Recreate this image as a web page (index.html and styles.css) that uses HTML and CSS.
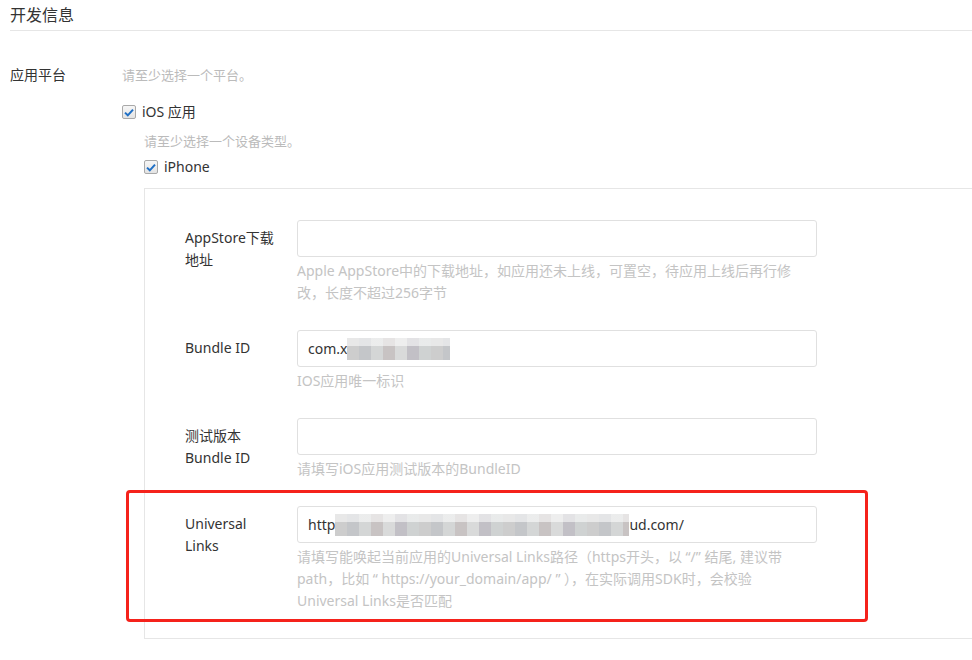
FILE: index.html
```html
<!doctype html>
<html lang="zh-CN">
	<head>
		<meta charset="UTF-8">
		<meta name="viewport" content="width=device-width, initial-scale=1.0">
		<title>开发信息</title>
		<link rel="stylesheet" href="styles.css">
	</head>
	<body>

		<div class="secao">
			<div class="titulo">开发信息</div>

			<div class="plataforma">
				<div class="plabel">应用平台</div>
				<div class="pconteudo">
					<div class="dica">请至少选择一个平台。</div>
					<label class="opcao">
						<span class="caixa"><svg width="10" height="9" viewBox="0 0 10 9"><path d="M1 4.6 L3.8 7.3 L9 1.6" fill="none" stroke="#1f6fc5" stroke-width="2"/></svg></span>iOS 应用
					</label>
					<div class="sub">
						<div class="dica">请至少选择一个设备类型。</div>
						<label class="opcao">
							<span class="caixa"><svg width="10" height="9" viewBox="0 0 10 9"><path d="M1 4.6 L3.8 7.3 L9 1.6" fill="none" stroke="#1f6fc5" stroke-width="2"/></svg></span>iPhone
						</label>

						<div class="painel">
							<div class="linha">
								<div class="rotulo"><span>AppStore下载<br>地址</span></div>
								<div class="campo">
									<div class="entrada"></div>
									<div class="ajuda">Apple AppStore中的下载地址，如应用还未上线，可置空，待应用上线后再行修<br>改，长度不超过256字节</div>
								</div>
							</div>
							<div class="linha">
								<div class="rotulo"><span>Bundle ID</span></div>
								<div class="campo">
									<div class="entrada">com.x<span class="borrao curto"></span></div>
									<div class="ajuda">IOS应用唯一标识</div>
								</div>
							</div>
							<div class="linha">
								<div class="rotulo"><span>测试版本<br>Bundle ID</span></div>
								<div class="campo">
									<div class="entrada"></div>
									<div class="ajuda">请填写iOS应用测试版本的BundleID</div>
								</div>
							</div>
							<div class="linha marcada">
								<div class="rotulo"><span>Universal<br>Links</span></div>
								<div class="campo">
									<div class="entrada">http<span class="borrao longo"></span>ud.com/</div>
									<div class="ajuda">请填写能唤起当前应用的Universal Links路径（https开头，以 “/” 结尾, 建议带<br>path，比如 “ https://your_domain/app/ ” ），在实际调用SDK时，会校验<br>Universal Links是否匹配</div>
								</div>
								<div class="destaque"></div>
							</div>
						</div>
					</div>
				</div>
			</div>
		</div>

	</body>
</html>
```

FILE: styles.css
```css
body{
	margin: 0;
	font-family: "Noto Sans", "Noto Sans CJK SC", sans-serif;
	color: #333;
	background: #fff;
	overflow: hidden;
}

.secao{
	padding-left: 10px;
}

.titulo{
	font-size: 16px;
	line-height: 30px;
	height: 30px;
	border-bottom: 1px solid #e6e6e6;
}

.plataforma{
	display: flex;
	margin-top: 34px;
}

.plabel{
	width: 112px;
	font-size: 14px;
	line-height: 20px;
	flex-shrink: 0;
}

.pconteudo{
	flex: 1;
}

.dica{
	font-size: 13px;
	line-height: 20px;
	color: #bbb;
}

.opcao{
	display: flex;
	align-items: center;
	font-size: 14px;
	line-height: 20px;
	margin-top: 17px;
}

.caixa{
	width: 12px;
	height: 12px;
	border: 1px solid #a9a9a9;
	border-radius: 2px;
	background: linear-gradient(#f6f6f6, #e4e4e4);
	display: flex;
	align-items: center;
	justify-content: center;
	margin-right: 6px;
}

.sub{
	padding-left: 22px;
	margin-top: 9px;
}

.sub .opcao{
	margin-top: 6px;
}

.painel{
	margin-top: 11px;
	border: 1px solid #e6e6e6;
	border-right: none;
	padding: 31px 0 0 40px;
}

.linha{
	display: flex;
	position: relative;
	padding-bottom: 26px;
}

.rotulo{
	width: 112px;
	flex-shrink: 0;
	font-size: 14px;
	line-height: 22px;
	padding-top: 7px;
}

.campo{
	width: 520px;
}

.entrada{
	height: 35px;
	border: 1px solid #e0e0e0;
	border-radius: 3px;
	padding: 0 10px;
	font-size: 14px;
	line-height: 35px;
	display: flex;
	align-items: center;
}

.ajuda{
	margin-top: 3px;
	font-size: 14px;
	line-height: 22px;
	color: #c4c4c4;
	white-space: nowrap;
}

.borrao{
	display: inline-block;
	height: 22px;
	background:
		linear-gradient(rgba(255,255,255,.55) 0 35%, rgba(255,255,255,0) 35%),
		repeating-linear-gradient(90deg, #cdcdcd 0 12px, #c4c6c9 12px 24px, #d4d6d6 24px 36px, #c8c3c3 36px 48px, #d9dada 48px 60px, #c2c0c6 60px 72px, #cfd2d2 72px 84px);
	filter: blur(0.6px);
}

.borrao.curto{
	width: 103px;
}

.borrao.longo{
	width: 294px;
}

.destaque{
	position: absolute;
	top: -16px;
	left: -59px;
	width: 736px;
	height: 126px;
	border: 3px solid #f5221b;
	border-radius: 4px;
}
```
